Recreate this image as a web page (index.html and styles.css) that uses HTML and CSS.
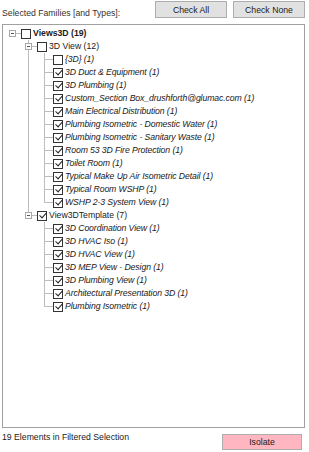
FILE: index.html
```html
<!DOCTYPE html>
<html lang="en">
<head>
  <meta charset="UTF-8" />
  <meta name="viewport" content="width=device-width, initial-scale=1.0"/>
  <title>Select Views</title>
  <link rel="stylesheet" href="styles.css">
</head>
<body>
  <div class="header">
    <span class="caption">Selected Families [and Types]:</span>
    <div class="actions">
      <button class="btn">Check All</button>
      <button class="btn">Check None</button>
    </div>
  </div>

  <div class="tree">
    <ul class="root">
      <li>
        <div class="node"><span class="exp"><span class="box"></span></span><span class="cb"></span><span class="txt bold">Views3D (19)</span></div>
        <ul class="children">
          <li>
            <div class="node"><span class="exp"><span class="box"></span></span><span class="cb"></span><span class="txt">3D View (12)</span></div>
            <ul class="children">
              <li><div class="node"><span class="exp"></span><span class="cb"></span><span class="txt it">{3D} (1)</span></div></li>
              <li><div class="node"><span class="exp"></span><span class="cb on"></span><span class="txt it">3D Duct &amp; Equipment (1)</span></div></li>
              <li><div class="node"><span class="exp"></span><span class="cb on"></span><span class="txt it">3D Plumbing (1)</span></div></li>
              <li><div class="node"><span class="exp"></span><span class="cb on"></span><span class="txt it">Custom_Section Box_drushforth@glumac.com (1)</span></div></li>
              <li><div class="node"><span class="exp"></span><span class="cb on"></span><span class="txt it">Main Electrical Distribution (1)</span></div></li>
              <li><div class="node"><span class="exp"></span><span class="cb on"></span><span class="txt it">Plumbing Isometric - Domestic Water (1)</span></div></li>
              <li><div class="node"><span class="exp"></span><span class="cb on"></span><span class="txt it">Plumbing Isometric - Sanitary Waste (1)</span></div></li>
              <li><div class="node"><span class="exp"></span><span class="cb on"></span><span class="txt it">Room 53 3D Fire Protection (1)</span></div></li>
              <li><div class="node"><span class="exp"></span><span class="cb on"></span><span class="txt it">Toilet Room (1)</span></div></li>
              <li><div class="node"><span class="exp"></span><span class="cb on"></span><span class="txt it">Typical Make Up Air Isometric Detail (1)</span></div></li>
              <li><div class="node"><span class="exp"></span><span class="cb on"></span><span class="txt it">Typical Room WSHP (1)</span></div></li>
              <li><div class="node"><span class="exp"></span><span class="cb on"></span><span class="txt it">WSHP 2-3 System View (1)</span></div></li>
            </ul>
          </li>
          <li>
            <div class="node"><span class="exp"><span class="box"></span></span><span class="cb on"></span><span class="txt">View3DTemplate (7)</span></div>
            <ul class="children">
              <li><div class="node"><span class="exp"></span><span class="cb on"></span><span class="txt it">3D Coordination View (1)</span></div></li>
              <li><div class="node"><span class="exp"></span><span class="cb on"></span><span class="txt it">3D HVAC Iso (1)</span></div></li>
              <li><div class="node"><span class="exp"></span><span class="cb on"></span><span class="txt it">3D HVAC View (1)</span></div></li>
              <li><div class="node"><span class="exp"></span><span class="cb on"></span><span class="txt it">3D MEP View - Design (1)</span></div></li>
              <li><div class="node"><span class="exp"></span><span class="cb on"></span><span class="txt it">3D Plumbing View (1)</span></div></li>
              <li><div class="node"><span class="exp"></span><span class="cb on"></span><span class="txt it">Architectural Presentation 3D (1)</span></div></li>
              <li><div class="node"><span class="exp"></span><span class="cb on"></span><span class="txt it">Plumbing Isometric (1)</span></div></li>
            </ul>
          </li>
        </ul>
      </li>
    </ul>
  </div>

  <div class="footer">
    <span class="status">19 Elements in Filtered Selection</span>
    <button class="btn isolate">Isolate</button>
  </div>
</body>
</html>
```

FILE: styles.css
```css
body {
  font-family: "Liberation Sans", Arial, sans-serif;
  font-size: 8.7px;
  color: #1a1a1a;
  margin: 0;
  background-color: #fff;
  width: 309px;
}
.header {
  display: flex;
  justify-content: space-between;
  padding: 1px 4px 0 2px;
}
.caption {
  padding-top: 6px;
  line-height: 13px;
  color: #333;
}
.actions {
  display: flex;
  gap: 6px;
}
.btn {
  font-family: inherit;
  font-size: 8.7px;
  color: #1a1a1a;
  background-color: #e1e1e1;
  border: 1px solid #adadad;
  width: 72px;
  height: 17px;
  padding: 0;
}
.tree {
  margin: 4px 4px 0 2px;
  height: 404px;
  box-sizing: border-box;
  border: 1px solid #a0a0a0;
  padding-top: 2px;
  padding-left: 0;
}
.tree ul {
  list-style: none;
  margin: 0;
  padding: 0;
}
.root {
  padding-left: 1px;
}
.tree .children {
  padding-left: 16px;
}
.children > li {
  position: relative;
}
/* sibling connector */
.children > li::before {
  content: "";
  position: absolute;
  left: 9px;
  top: 0;
  bottom: 0;
  border-left: 1px solid #bdbdbd;
}
.children > li:last-child::before {
  bottom: auto;
  height: 7px;
}
.node {
  display: flex;
  align-items: center;
  height: 13px;
  line-height: 13px;
  white-space: nowrap;
}
.exp {
  position: relative;
  width: 18px;
  height: 13px;
  display: flex;
  align-items: center;
  justify-content: center;
  flex-shrink: 0;
}
.exp::before {
  content: "";
  position: absolute;
  left: 9px;
  right: 0;
  top: 6px;
  border-top: 1px solid #bdbdbd;
}
.box {
  position: relative;
  z-index: 1;
  width: 5px;
  height: 5px;
  border: 1px solid #a8a8a8;
  background: #fff;
  margin-left: 1px;
}
.box::after {
  content: "";
  position: absolute;
  left: 1px;
  top: 2px;
  width: 3px;
  border-top: 1px solid #555;
}
.cb {
  position: relative;
  width: 10px;
  height: 10px;
  box-sizing: border-box;
  border: 1px solid #333;
  background: #fff;
  margin-right: 2px;
  flex-shrink: 0;
}
.cb.on::after {
  content: "";
  position: absolute;
  left: 2.5px;
  top: -0.5px;
  width: 3px;
  height: 6px;
  border: solid #222;
  border-width: 0 1.2px 1.2px 0;
  transform: rotate(42deg);
}
.bold {
  font-weight: bold;
}
.it {
  font-style: italic;
  letter-spacing: -0.1px;
}
.footer {
  display: flex;
  justify-content: space-between;
  padding: 0 7px 0 2px;
}
.status {
  padding-top: 3px;
  line-height: 13px;
}
.isolate {
  margin-top: 6px;
  width: 80px;
  height: 16px;
  background-color: #ffb6c1;
}
```
